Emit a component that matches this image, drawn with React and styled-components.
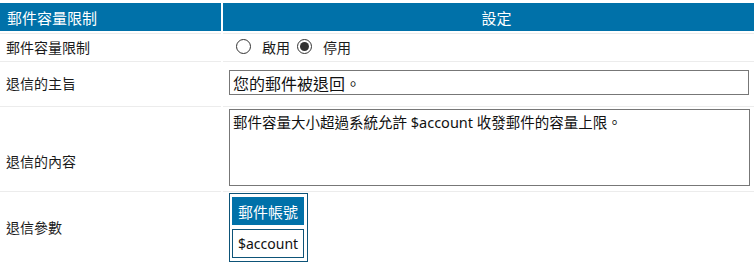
import React, { useState } from "react";
import styled, { createGlobalStyle } from "styled-components";

const GlobalStyle = createGlobalStyle`
  html, body {
    margin: 0;
    padding: 0;
    background: #fff;
    overflow: hidden;
  }
  body {
    font-family: "Noto Sans", "Noto Sans CJK TC", sans-serif;
    color: #1a1a1a;
  }
`;

const Table = styled.div`
  display: grid;
  grid-template-columns: 221px 1fr;
  gap: 2px;
  margin-top: 3px;
  width: 754px;
`;

const HeadCell = styled.div`
  background: #0071a9;
  color: #fff;
  font-size: 15px;
  height: 28px;
  display: flex;
  align-items: center;
  justify-content: ${(p) => (p.$center ? "center" : "flex-start")};
  padding: ${(p) => (p.$center ? "0 0 0 14px" : "0 7px")};
  box-sizing: border-box;
`;

const Label = styled.div`
  border-top: 1px solid #ececec;
  font-size: 14px;
  padding: ${(p) => (p.$offset ? `${p.$offset}px 6px 0` : "0 6px")};
  display: flex;
  align-items: center;
`;

const Field = styled.div`
  border-top: 1px solid #ececec;
  padding: ${(p) => p.$pad || "0 6px"};
  display: flex;
  align-items: center;
`;

const RadioGroup = styled.div`
  display: flex;
  align-items: center;
  height: 25px;
  font-size: 14px;
  padding-left: 7px;
`;

const RadioLabel = styled.label`
  display: flex;
  align-items: center;
  gap: 11px;
  margin-right: 7px;
  cursor: pointer;
`;

const Radio = styled.input.attrs({ type: "radio" })`
  appearance: none;
  margin: 0;
  width: 15px;
  height: 15px;
  border: 1px solid #333;
  border-radius: 50%;
  box-sizing: border-box;
  background: #fff;
  display: grid;
  place-items: center;
  &:checked::after {
    content: "";
    width: 9px;
    height: 9px;
    border-radius: 50%;
    background: #333;
  }
`;

const TextInput = styled.input`
  width: 520px;
  height: 25px;
  box-sizing: border-box;
  border: 1px solid #777;
  font-family: "Noto Sans", "Noto Sans CJK TC", sans-serif;
  font-size: 16px;
  padding: 0 3px;
  color: #111;
  outline: none;
`;

const TextArea = styled.textarea`
  width: 521px;
  height: 77px;
  box-sizing: border-box;
  border: 1px solid #777;
  font-family: "Noto Sans", "Noto Sans CJK TC", sans-serif;
  font-size: 14.5px;
  line-height: 20px;
  padding: 2px 3px;
  resize: none;
  color: #111;
  outline: none;
  display: block;
`;

const ParamBox = styled.div`
  border: 1px solid #0d5378;
  padding: 3px 3px 3px 2px;
  display: grid;
  gap: 4px;
  box-sizing: border-box;
`;

const ParamHead = styled.div`
  background: #0071a9;
  color: #fff;
  font-size: 15px;
  height: 28px;
  padding: 0 6px;
  display: flex;
  align-items: center;
  justify-content: center;
`;

const ParamItem = styled.div`
  border: 1px solid #0d5378;
  font-size: 14px;
  height: 29px;
  box-sizing: border-box;
  padding: 0 5px;
  display: flex;
  align-items: center;
  color: #111;
  cursor: pointer;
`;

export default function App() {
  const [limit, setLimit] = useState("off");

  return (
    <>
      <GlobalStyle />
      <Table>
        <HeadCell>郵件容量限制</HeadCell>
        <HeadCell $center>設定</HeadCell>

        <Label>郵件容量限制</Label>
        <Field>
          <RadioGroup>
            <RadioLabel>
              <Radio name="limit" checked={limit === "on"} onChange={() => setLimit("on")} />
              啟用
            </RadioLabel>
            <RadioLabel>
              <Radio name="limit" checked={limit === "off"} onChange={() => setLimit("off")} />
              停用
            </RadioLabel>
          </RadioGroup>
        </Field>

        <Label>退信的主旨</Label>
        <Field $pad="8px 6px 9px">
          <TextInput defaultValue="您的郵件被退回。" />
        </Field>

        <Label $offset={26}>退信的內容</Label>
        <Field $pad="2px 6px 3px">
          <TextArea defaultValue="郵件容量大小超過系統允許 $account 收發郵件的容量上限。" />
        </Field>

        <Label>退信參數</Label>
        <Field $pad="1px 6px 0">
          <ParamBox>
            <ParamHead>郵件帳號</ParamHead>
            <ParamItem>$account</ParamItem>
          </ParamBox>
        </Field>
      </Table>
    </>
  );
}
